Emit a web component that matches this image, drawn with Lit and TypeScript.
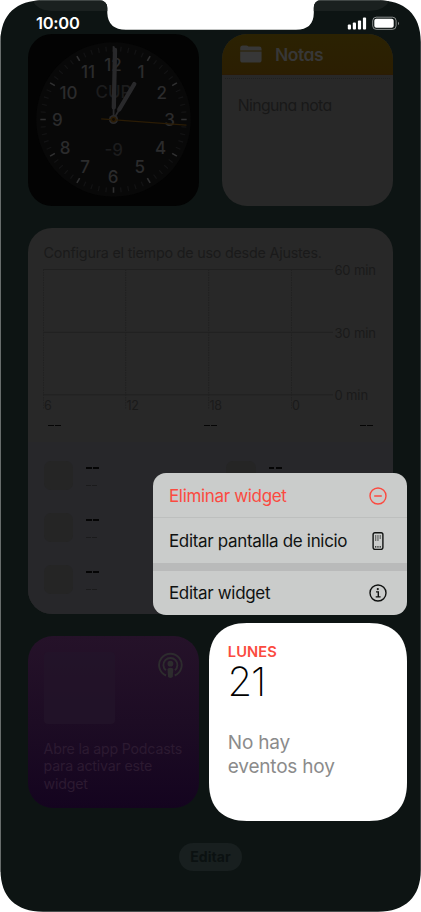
import { LitElement, html, css, svg } from "lit";
import { customElement } from "lit/decorators.js";

const range = (n: number) => Array.from({ length: n }, (_, i) => i);

@customElement("status-bar")
class StatusBar extends LitElement {
  static styles = css`
    :host { display: flex; justify-content: space-between; align-items: flex-start; height: 34px; box-sizing: border-box; padding: 12.5px 21px 0 36px; color: #fff; }
    .time { font: 600 16.5px/20px Inter, sans-serif; letter-spacing: -0.25px; }
    .icons { display: block; margin-top: 3px; }
  `;
  render() {
    return html`
      <div class="time">10:00</div>
      <svg class="icons" width="54" height="15" viewBox="0 0 54 15">
        <g fill="#fff">
          <rect x="1.8" y="8.6" width="3.2" height="4.8" rx="1"/>
          <rect x="6.8" y="6.6" width="3.2" height="6.8" rx="1"/>
          <rect x="11.9" y="4.4" width="3.2" height="9" rx="1"/>
          <rect x="16.9" y="1.6" width="3.2" height="11.8" rx="1"/>
          <rect x="28.3" y="2.8" width="19.4" height="9" rx="2"/>
          <path d="M52 5.7c1.3.5 1.3 2.9 0 3.4z" opacity=".55"/>
        </g>
        <rect x="26.7" y="1.2" width="23.4" height="12.2" rx="3.6" fill="none" stroke="#fff" stroke-opacity=".5" stroke-width="1"/>
      </svg>`;
  }
}

@customElement("clock-widget")
class ClockWidget extends LitElement {
  static styles = css`
    :host { display: block; width: 171.5px; height: 171.5px; border-radius: 24px; background: #030303; overflow: hidden; }
    svg { display: block; }
    text { font-family: Inter, sans-serif; font-weight: 500; font-size: 17px; text-anchor: middle; fill: #2b2b2c; }
    .dim { fill: #1c1c1d; }
  `;
  render() {
    const nums: [string, number, number][] = [
      ["12", 85, 36.5], ["1", 113, 44.2], ["2", 133.7, 64.5], ["3", 141.6, 92], ["4", 132.7, 120], ["5", 111.7, 139],
      ["6", 85.2, 149], ["7", 57.2, 139], ["8", 37.2, 120], ["9", 29.3, 92], ["10", 40.5, 64.5], ["11", 60, 44.2]];
    return html`<svg width="171.5" height="171.5" viewBox="0 0 171.5 171.5">
      <circle cx="85.5" cy="85.5" r="77.3" fill="#080808"/>
      ${range(60).map(i => svg`<line x1="85.5" x2="85.5" y1="12.3" y2=${i % 5 ? 17.3 : 17.8}
        stroke=${i % 5 ? "#131314" : "#303031"} stroke-width=${i % 5 ? 1.2 : 1.6} transform="rotate(${i * 6} 85.5 85.5)"/>`)}
      <text class="dim" x="85.5" y="63.6">CUP</text>
      <text class="dim" x="85.8" y="121.5">-9</text>
      ${nums.map(([t, x, y]) => svg`<text x=${x} y=${y}>${t}</text>`)}
      <g stroke="#29292b" stroke-linecap="round">
        <path d="M85.5 85.5L91 76" stroke-width="1.8"/>
        <path d="M91.2 75.5L106.3 50" stroke-width="4.3"/>
        <path d="M85.6 85.5V74" stroke-width="1.8"/>
        <path d="M85.8 73.5L87 16" stroke-width="4.3"/>
        <path d="M86 30V13.2" stroke-width="1.4"/>
      </g>
      <circle cx="85.5" cy="85.5" r="4.6" fill="#29292b"/>
      <path d="M73.2 84.8L158.5 91.2" stroke="#2b1c05" stroke-width="1.3"/>
      <circle cx="85.5" cy="85.5" r="3" fill="#2b1c05"/>
      <circle cx="85.5" cy="85.5" r="1.4" fill="#100b04"/>
    </svg>`;
  }
}

@customElement("notes-widget")
class NotesWidget extends LitElement {
  static styles = css`
    :host { display: block; width: 171.5px; height: 171.5px; border-radius: 25px; background: #282828; overflow: hidden; font-family: Inter, sans-serif; font-feature-settings: "cv11"; }
    .head { display: flex; align-items: center; height: 41px; box-sizing: border-box; padding-left: 18px; gap: 13.3px; background: linear-gradient(#2b2202, #2b1e02); border-bottom: 1px solid #2b1b05; color: #373737; font-weight: 600; font-size: 17.5px; letter-spacing: -0.45px; }
    .dots { margin: 3px 3px 0; border-top: 1.2px dotted #202020; }
    .body { margin: 17.2px 0 0 16px; color: #181818; font-size: 15.8px; line-height: 20px; letter-spacing: -0.6px; }
  `;
  render() {
    return html`<div class="head">
        <svg width="22" height="18" viewBox="0 0 22 18" fill="#373737">
          <path d="M.2 5.6V3Q.2.5 2.7.5H6.4Q7.5.5 8.2 1.3L8.5 1.6H19.3Q21.6 1.6 21.6 4V5.6z"/>
          <path d="M.2 6.6H21.6V15Q21.6 17.6 19 17.6H2.8Q.2 17.6.2 15z"/>
        </svg><span>Notas</span></div>
      <div class="dots"></div>
      <div class="body">Ninguna nota</div>`;
  }
}

@customElement("usage-widget")
class UsageWidget extends LitElement {
  static styles = css`
    :host { display: flex; flex-direction: column; width: 365.8px; height: 385.5px; border-radius: 24px; background: #282828; overflow: hidden; font-family: Inter, sans-serif; color: #1a1a1a; }
    .title, .chart, .totals { flex: none; }
    .title { height: 37px; padding: 16px 0 0 16px; box-sizing: border-box; font-size: 14.3px; line-height: 18px; white-space: nowrap; letter-spacing: -0.2px; }
    .chart { display: flex; gap: 1px; padding-left: 15.8px; height: 150px; }
    .labels { display: flex; flex-direction: column; gap: 46.8px; margin-top: -3.3px; font-size: 13px; line-height: 16px; letter-spacing: -0.1px; white-space: nowrap; }
    .chart text { font-family: Inter, sans-serif; font-size: 12.5px; letter-spacing: -0.3px; fill: #1a1a1a; }
    .totals { display: flex; justify-content: space-between; padding: 9.5px 20.5px 0 20.5px; height: 27px; box-sizing: border-box; }
    .dash { display: flex; gap: 1.2px; }
    .dash i { width: 5.9px; height: 1.5px; background: #050505; }
    .dash.faint i { width: 5px; height: 1px; background: #1b1b1c; }
    .apps { flex: 1; min-height: 0; background: #27272a; display: grid; grid-template-columns: 182.5px 1fr; grid-auto-rows: 52px; padding: 18.8px 0 0 16px; box-sizing: border-box; }
    .app { display: flex; gap: 13px; }
    .tile { width: 29.5px; height: 29.5px; border-radius: 7px; background: #252525; }
    .lines { display: flex; flex-direction: column; gap: 16.4px; padding-top: 6.4px; }
  `;
  dash(faint = false) { return html`<div class="dash ${faint ? "faint" : ""}"><i></i><i></i></div>`; }
  render() {
    return html`
      <div class="title">Configura el tiempo de uso desde Ajustes.</div>
      <div class="chart">
        <svg width="290" height="150" viewBox="0 0 290 150">
          <g stroke="#202020" stroke-width="1" fill="none">
            <path d="M0 4.5H290M0 67.3H290M0 129.8H290"/>
            <path d="M.5 4.5V144M82.7 4.5V144M165.7 4.5V144M248.5 4.5V144" stroke="#212121" stroke-dasharray="1.5 1"/>
          </g>
          <text x=".9" y="145.3">6</text><text x="83.5" y="145.3">12</text>
          <text x="166.5" y="145.3">18</text><text x="249" y="145.3">0</text>
        </svg>
        <div class="labels"><span>60 min</span><span>30 min</span><span>0 min</span></div>
      </div>
      <div class="totals">${this.dash()}${this.dash()}${this.dash()}</div>
      <div class="apps">${range(6).map(() => html`<div class="app"><div class="tile"></div><div class="lines">${this.dash()}${this.dash(true)}</div></div>`)}</div>`;
  }
}

@customElement("podcasts-widget")
class PodcastsWidget extends LitElement {
  static styles = css`
    :host { display: block; width: 171.5px; height: 171.5px; border-radius: 25px; background: linear-gradient(#251229, #1d0c24 50%, #14041f); overflow: hidden; box-sizing: border-box; padding: 16px 16px 0; font-family: Inter, sans-serif; }
    .row { display: flex; justify-content: space-between; }
    .art { width: 71.5px; height: 71.5px; border-radius: 4px; background: #231429; opacity: .75; }
    .text { margin: 16.3px -10px 0 0; color: #2c1a31; font-size: 14.2px; line-height: 17.3px; letter-spacing: -0.2px; }
  `;
  render() {
    return html`<div class="row"><div class="art"></div>
        <svg width="25" height="27" viewBox="0 0 25 27">
          <g fill="none" stroke="#2d2c2e" stroke-width="1.9">
            <path d="M8.1 23.5A11.3 11.3 0 1 1 16.7 23.5"/>
            <path d="M7.9 18.3A7 7 0 1 1 16.9 18.3"/>
          </g>
          <circle cx="12.4" cy="11.7" r="2.9" fill="#2d2c2e"/>
          <path d="M9.5 17.6Q9.5 15.7 12.4 15.7T15.3 17.6L14.8 24.2Q14.6 26 12.4 26T10 24.2z" fill="#2d2c2e"/>
        </svg></div>
      <div class="text">Abre la app Podcasts<br>para activar este<br>widget</div>`;
  }
}

@customElement("calendar-widget")
class CalendarWidget extends LitElement {
  static styles = css`
    :host { display: block; width: 198px; height: 198px; position: relative; font-family: Inter, sans-serif; }
    .plate { position: absolute; inset: 0; }
    .content { position: relative; padding: 19.2px 0 0 19px; }
    .day { color: #fb4a40; font-weight: 600; font-size: 14.7px; line-height: 19px; letter-spacing: 0.1px; }
    .num { font-weight: 250; font-size: 40px; line-height: 40px; letter-spacing: -1.2px; margin-left: -0.3px; color: #000; }
    .none { margin-top: 29.5px; color: #8b8b8b; font-size: 19px; line-height: 23.5px; letter-spacing: -0.2px; }
  `;
  render() {
    return html`<svg class="plate" width="198" height="198" viewBox="0 0 198 198">
        <path fill="#fff" d="M38 0H160C184 0 198 13 198 38V160C198 185 184 198 160 198H38C14 198 0 185 0 160V38C0 13 14 0 38 0z"/></svg>
      <div class="content"><div class="day">LUNES</div><div class="num">21</div>
      <div class="none">No hay<br>eventos hoy</div></div>`;
  }
}

@customElement("context-menu")
class ContextMenu extends LitElement {
  static styles = css`
    :host { display: block; width: 254px; height: 141.7px; border-radius: 13px; background: #cacccb; overflow: hidden; font-family: Inter, sans-serif; color: #101211; }
    .item { display: flex; justify-content: space-between; align-items: center; height: 44.7px; box-sizing: border-box; padding: 1px 20px 0 16.3px; font-size: 17px; letter-spacing: -0.33px; white-space: nowrap; }
    .danger { color: #fb4a40; border-bottom: 1px solid #bdbfbe; padding-top: 2px; }
    .gap { height: 8px; background: #b9baba; }
    .gap + .item { padding-top: 0; }
    svg { display: block; fill: none; stroke: currentColor; }
  `;
  render() {
    return html`
      <div class="item danger"><span>Eliminar widget</span>
        <svg width="18" height="18" viewBox="0 0 18 18" stroke-width="1.4"><circle cx="9" cy="9" r="8"/><path d="M5.2 9H12.8" stroke-width="1.5"/></svg></div>
      <div class="item"><span>Editar pantalla de inicio</span>
        <svg width="18" height="18" viewBox="0 0 18 18" stroke-width="1.4"><rect x="4.1" y=".8" width="9.8" height="16.6" rx="1.8"/>
        <path d="M6 4H12M6 6H12M6 8H9.6M6 14.8H12" stroke-width="1.2" stroke-dasharray="1.3 1"/></svg></div>
      <div class="gap"></div>
      <div class="item"><span>Editar widget</span>
        <svg width="18" height="18" viewBox="0 0 18 18" stroke-width="1.4"><circle cx="9" cy="9" r="8"/><circle cx="8.8" cy="5.1" r="1.1" fill="currentColor" stroke="none"/><path d="M7 7.9H9.3V12.8M6.7 12.9H11.6"/></svg></div>`;
  }
}

@customElement("app-root")
class AppRoot extends LitElement {
  static styles = css`
    :host { display: block; position: relative; width: 421px; height: 912px; background: #fff; overflow: hidden; font-family: Inter, sans-serif; }
    .frame { position: absolute; inset: 0; }
    .screen { position: relative; display: flex; flex-direction: column; height: 912px; }
    .grid { display: grid; grid-template-columns: 171.5px 171.5px; column-gap: 22.6px; row-gap: 22.6px; padding-left: 27.6px; }
    .wide { grid-column: 1 / 3; }
    .edit { align-self: center; margin-top: 35.6px; width: 63px; height: 28px; border-radius: 14px; background: #181f1f; color: #0b1111; font-weight: 700; font-size: 14px; line-height: 27px; text-align: center; letter-spacing: 0.1px; }
    .menu { position: absolute; left: 152.7px; top: 473.3px; }
    .lifted { position: absolute; left: 208.8px; top: 623.4px; }
  `;
  render() {
    return html`
      <svg class="frame" width="421" height="912" viewBox="0 0 421 912">
        <defs><clipPath id="s"><path d="M.5 42C.5 14 17 .3 43 .3H99Q107 .3 107.3 8V13Q108 29.7 126 29.7H296Q313.6 29.7 313.8 13V8Q314 .3 321 .3H378C404 .3 420.8 14 420.8 42V870C420.8 897 405 911.7 378 911.7H43C16 911.7.5 897 .5 870z"/></clipPath></defs>
        <g clip-path="url(#s)">
          <rect width="421" height="912" fill="#0d1413"/>
          <path d="M32 0Q38 11 51 11H108V0z" fill="#1a201f"/>
          <path d="M313 0V11H370Q384 11 390 0z" fill="#1a201f"/>
          <path d="M40 .5H380" stroke="#4a504f"/>
          <path d="M.5 34V872" stroke="#4a504f"/>
        </g>
      </svg>
      <div class="screen">
        <status-bar></status-bar>
        <div class="grid">
          <clock-widget></clock-widget>
          <notes-widget></notes-widget>
          <usage-widget class="wide"></usage-widget>
          <podcasts-widget></podcasts-widget>
        </div>
        <div class="edit">Editar</div>
      </div>
      <context-menu class="menu"></context-menu>
      <calendar-widget class="lifted"></calendar-widget>`;
  }
}
